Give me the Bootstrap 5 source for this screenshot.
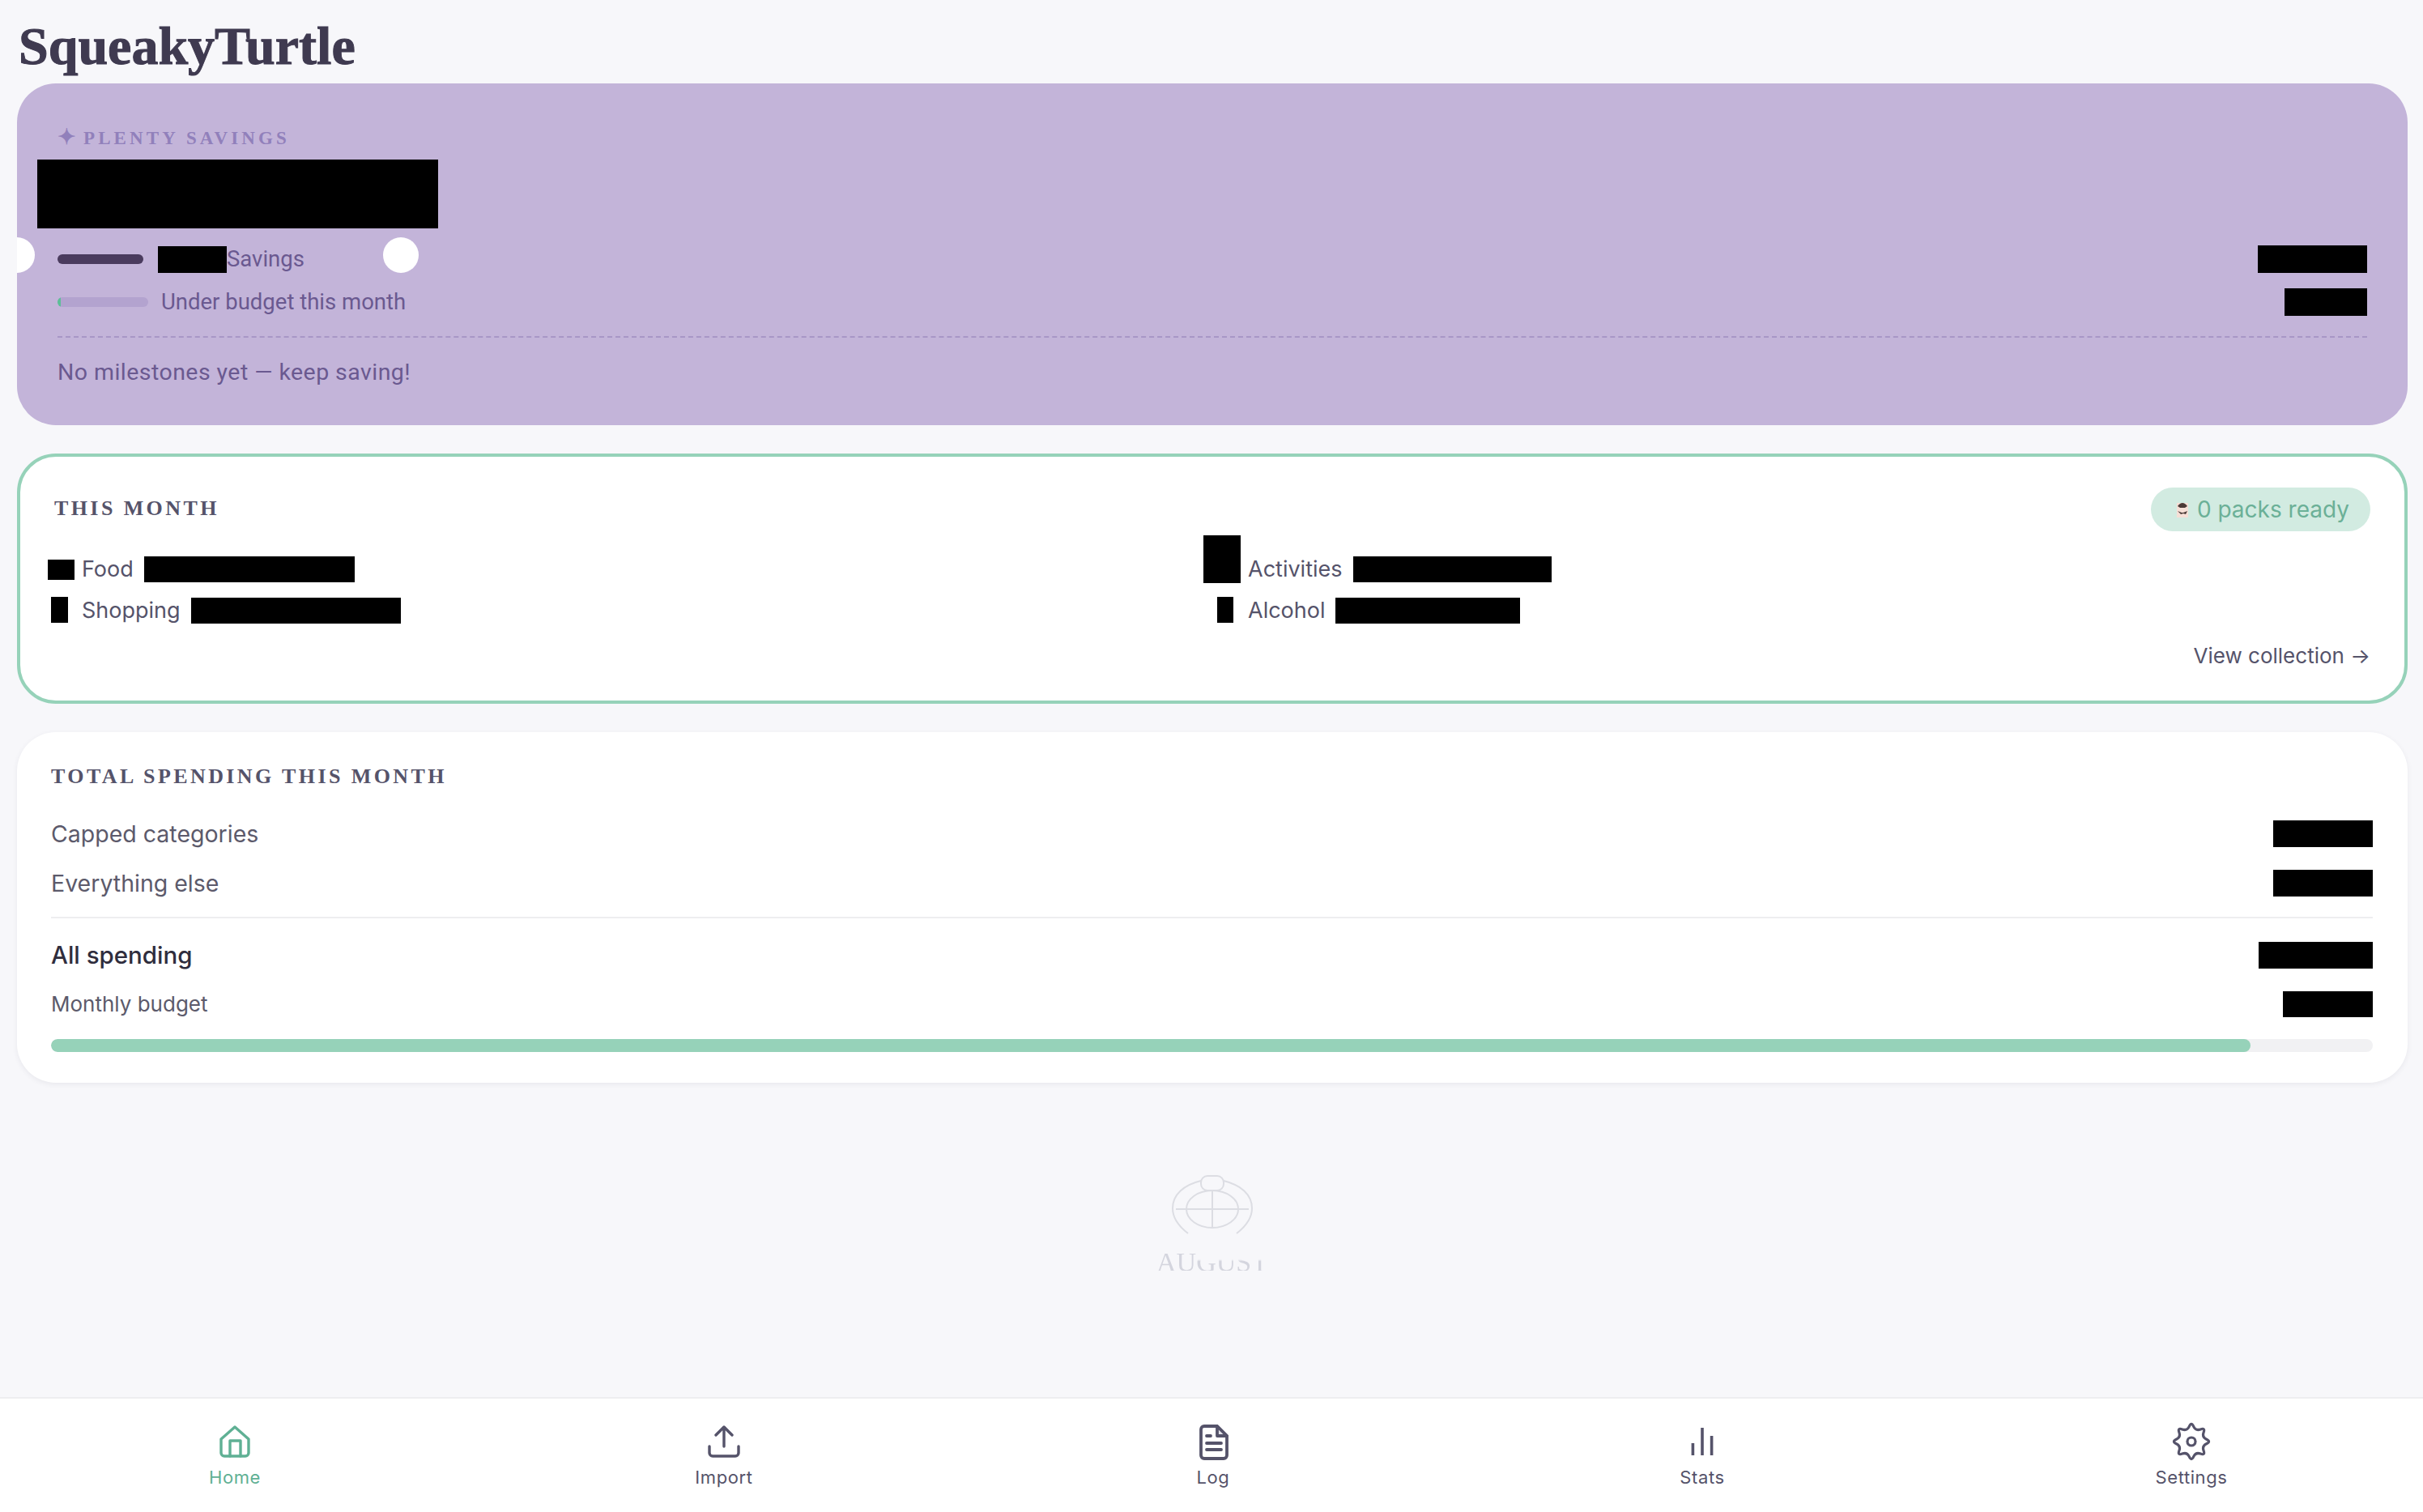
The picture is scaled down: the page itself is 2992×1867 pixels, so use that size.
<!DOCTYPE html>
<html lang="en">
<head>
  <meta charset="UTF-8">
  <meta name="viewport" content="width=device-width, initial-scale=1.0">
  <link rel="stylesheet" href="https://cdn.jsdelivr.net/npm/bootstrap@5.3.6/dist/css/bootstrap.min.css">
  <script src="https://cdn.jsdelivr.net/npm/bootstrap@5.3.6/dist/js/bootstrap.bundle.min.js"></script>
  <style>
    html, body { height: 100%; }
    body { background: #f7f7fa; font-family: "Inter", "Liberation Sans", sans-serif; color: #5c5a6b; overflow: hidden; }
    .st-page { height: 1867px; padding-top: 24px; }
    .st-main { padding: 0 19px 0 21px; }
    .st-title { font-family: "Liberation Serif", serif; font-weight: 700; font-size: 66px; line-height: 1; color: #3f3a50; margin: 0 0 0 2px; height: 79px; letter-spacing: 0; -webkit-text-stroke: 1px #3f3a50; }
    .st-hero { height: 422px; background: #c3b4d9; border-radius: 48px; padding: 51px 50px 0; position: relative; overflow: hidden; color: #6a5990; font-family: "Roboto", sans-serif; font-size: 27.5px; }
    .st-label { font-family: "Liberation Serif", serif; font-weight: 700; font-size: 23px; letter-spacing: 4.1px; color: #9180bb; height: 44px; line-height: 30px; }
    .st-star { font-size: 27px; letter-spacing: 0; margin-right: 9px; }
    .st-big { width: 495px; height: 85px; background: #000; margin: -1px 0 21px -25px; }
    .st-hrow { height: 34px; }
    .st-hrow2 { height: 34px; margin-top: 19px; }
    .st-barsm { width: 106px; height: 12px; background: #4a3b5e; border-radius: 6px; }
    .st-bud { width: 112px; height: 12px; background: #b3a3cf; border-radius: 6px; overflow: hidden; }
    .st-bud-fill { width: 4px; height: 100%; background: #5cbf97; }
    .rd { background: #000; display: block; flex: none; }
    .rd-a { width: 85px; height: 33px; margin-left: 18px; }
    .rd-b { width: 135px; height: 34px; }
    .rd-c { width: 102px; height: 34px; }
    .st-dash { border-top: 2px dashed #a896c6; margin: 25px 0 0; }
    .st-none { margin-top: 25px; line-height: 36px; font-size: 28.5px; letter-spacing: .45px; }
    .st-hole { position: absolute; width: 44px; height: 44px; border-radius: 50%; background: #fff; top: 190px; }
    .st-hole-l { left: -22px; }
    .st-hole-r { left: 452px; }
    .st-month { height: 309px; margin-top: 35px; background: #fff; border: 4px solid #96d2b9; border-radius: 48px; padding: 38px 42px 0; }
    .st-head { font-family: "Liberation Serif", serif; font-weight: 700; font-size: 26px; letter-spacing: 3.4px; color: #55536a; line-height: 30px; }
    .st-top .st-head { margin-bottom: 3px; }
    .st-pill { height: 54px; background: #d2ebe1; color: #6bb097; border-radius: 27px; font-size: 28px; padding: 0 26px 0 29px; }
    .st-top { height: 54px; }
    .st-grid { display: grid; grid-template-columns: 1fr 1fr; column-gap: 20px; row-gap: 17px; margin-top: 30px; }
    .st-cat { height: 34px; font-size: 27px; color: #55536a; }
    .st-slot { width: 34px; height: 34px; position: relative; flex: none; }
    .st-cat-food { width: 33px; height: 25px; margin: 5px 0 0 -8px; }
    .st-cat-shop { width: 21px; height: 32px; margin-left: -4px; }
    .st-cat-act { width: 46px; height: 59px; margin: -25px 0 0 -21px; }
    .st-cat-alc { width: 20px; height: 32px; margin-left: -4px; }
    .st-val { height: 32px; margin-left: 13px; }
    .w-food { width: 260px; } .w-shop { width: 259px; } .w-act { width: 245px; } .w-alc { width: 228px; }
    .st-view { font-size: 26px; color: #55536a; margin-top: 21px; line-height: 36px; }
    .st-total { height: 433px; margin-top: 35px; background: #fff; border-radius: 48px; box-shadow: 0 2px 6px rgba(60, 60, 90, .08); padding: 40px 43px 0 42px; }
    .st-line { font-size: 28.5px; color: #5c5a6b; height: 33px; line-height: 33px; }
    .st-line-1 { margin-top: 39px; }
    .st-line-2 { margin-top: 28px; }
    .st-rule { height: 2px; background: #eeeef0; margin: 25px 0 29px; }
    .st-all { font-size: 29.5px; font-weight: 500; color: #2f2d3d; }
    .st-budget { font-size: 26px; color: #5c5a6b; margin-top: 27px; }
    .rd-123 { width: 123px; height: 33px; }
    .rd-141 { width: 141px; height: 33px; }
    .rd-111 { width: 111px; height: 32px; }
    .st-track { height: 16px; margin-top: 27px; background: #f1f1f3; border-radius: 8px; overflow: hidden; }
    .st-fill { height: 100%; background: #96d2b9; border-radius: 8px; }
    .st-logo { margin-top: 114px; }
    .st-logo-word { font-family: "Liberation Serif", serif; font-size: 34px; line-height: 34px; height: 34px; color: #d4d5de; margin-top: 15px; -webkit-mask-image: linear-gradient(to bottom, #000 79%, transparent 79%); mask-image: linear-gradient(to bottom, #000 79%, transparent 79%); }
    .st-logo-fade { -webkit-mask-image: linear-gradient(to bottom, transparent 38%, #000 46%); mask-image: linear-gradient(to bottom, transparent 38%, #000 46%); }
    .st-nav { position: absolute; left: 0; right: 0; top: 1725px; height: 142px; background: #fff; border-top: 2px solid #eeeef0; padding: 0 196px 0 200px; }
    .st-item { width: 180px; padding-top: 29px; color: #55536a; font-size: 22px; line-height: 28px; letter-spacing: .6px; text-decoration: none; }
    .st-item svg { display: block; width: 48px; height: 48px; margin-bottom: 6px; }
    .st-item-on { color: #5fb094; }
  </style>
  <title>SqueakyTurtle</title>
</head>
<body>
  <div class="st-page position-relative">
    <div class="st-main">
      <h1 class="st-title">SqueakyTurtle</h1>

      <section class="st-hero">
        <span class="st-hole st-hole-l"></span>
        <span class="st-hole st-hole-r"></span>
        <div class="st-label"><span class="st-star">✦</span>PLENTY SAVINGS</div>
        <div class="st-big"></div>
        <div class="st-hrow d-flex align-items-center justify-content-between">
          <div class="d-flex align-items-center">
            <div class="st-barsm"></div>
            <span class="rd rd-a"></span>
            <span>Savings</span>
          </div>
          <span class="rd rd-b"></span>
        </div>
        <div class="st-hrow2 d-flex align-items-center justify-content-between">
          <div class="d-flex align-items-center gap-3">
            <div class="st-bud"><div class="st-bud-fill"></div></div>
            <span>Under budget this month</span>
          </div>
          <span class="rd rd-c"></span>
        </div>
        <div class="st-dash"></div>
        <div class="st-none">No milestones yet — keep saving!</div>
      </section>

      <section class="st-month">
        <div class="st-top d-flex align-items-center justify-content-between">
          <div class="st-head">THIS MONTH</div>
          <div class="st-pill d-flex align-items-center gap-2">
            <svg width="20" height="26" viewBox="0 0 20 26"><rect x="3" y="5" width="14" height="18" fill="#f6dfd6"/><path d="M4 9q6-8 12 0l-3 2H7z" fill="#4b3a36"/><path d="M4 15l5 2 2 0 5-2-2 4-3-1-3 1z" fill="#4b3a36"/></svg>
            <span>0 packs ready</span>
          </div>
        </div>
        <div class="st-grid">
          <div class="st-cat d-flex align-items-center">
            <div class="st-slot"><span class="rd st-cat-food"></span></div>
            <span>Food</span>
            <span class="rd st-val w-food"></span>
          </div>
          <div class="st-cat d-flex align-items-center">
            <div class="st-slot"><span class="rd st-cat-act"></span></div>
            <span>Activities</span>
            <span class="rd st-val w-act"></span>
          </div>
          <div class="st-cat d-flex align-items-center">
            <div class="st-slot"><span class="rd st-cat-shop"></span></div>
            <span>Shopping</span>
            <span class="rd st-val w-shop"></span>
          </div>
          <div class="st-cat d-flex align-items-center">
            <div class="st-slot"><span class="rd st-cat-alc"></span></div>
            <span>Alcohol</span>
            <span class="rd st-val w-alc"></span>
          </div>
        </div>
        <div class="st-view text-end">View collection →</div>
      </section>

      <section class="st-total">
        <div class="st-head">TOTAL SPENDING THIS MONTH</div>
        <div class="st-line st-line-1 d-flex align-items-center justify-content-between">
          <span>Capped categories</span><span class="rd rd-123"></span>
        </div>
        <div class="st-line st-line-2 d-flex align-items-center justify-content-between">
          <span>Everything else</span><span class="rd rd-123"></span>
        </div>
        <div class="st-rule"></div>
        <div class="st-line st-all d-flex align-items-center justify-content-between">
          <span>All spending</span><span class="rd rd-141"></span>
        </div>
        <div class="st-line st-budget d-flex align-items-center justify-content-between">
          <span>Monthly budget</span><span class="rd rd-111"></span>
        </div>
        <div class="st-track"><div class="st-fill" style="width: 94.75%"></div></div>
      </section>

      <div class="st-logo d-flex flex-column align-items-center">
        <svg width="100" height="76" viewBox="0 0 100 76" fill="none" stroke="#dcdde3" stroke-width="2">
          <path d="M20 72C7 62 1 51 1 41 1 24 15 12 36 7M64 7c21 5 35 17 35 34 0 10-6 21-19 31"/>
          <ellipse cx="50" cy="42" rx="32" ry="23"/>
          <rect x="36" y="1" width="28" height="18" rx="8"/>
          <path d="M5 42h90M50 19v46"/>
        </svg>
        <div class="st-logo-word">AU<span class="st-logo-fade d-inline-block">GUST</span></div>
      </div>
    </div>

    <nav class="st-nav d-flex justify-content-between">
      <a class="st-item st-item-on d-flex flex-column align-items-center" href="#">
        <svg viewBox="0 0 24 24" fill="none" stroke="currentColor" stroke-width="1.7" stroke-linecap="round" stroke-linejoin="round"><path d="M3.5 10.5 12 3l8.5 7.5V19a2 2 0 0 1-2 2h-13a2 2 0 0 1-2-2z"/><path d="M9 21v-9.500h6.500V21"/></svg>
        <span>Home</span>
      </a>
      <a class="st-item d-flex flex-column align-items-center" href="#">
        <svg viewBox="0 0 24 24" fill="none" stroke="currentColor" stroke-width="1.7" stroke-linecap="round" stroke-linejoin="round"><path d="M3 15v4a2 2 0 0 0 2 2h14a2 2 0 0 0 2-2v-4"/><path d="M12 15V3M7 8l5-5 5 5"/></svg>
        <span>Import</span>
      </a>
      <a class="st-item d-flex flex-column align-items-center" href="#">
        <svg viewBox="0 0 24 24" fill="none" stroke="currentColor" stroke-width="1.9" stroke-linecap="round" stroke-linejoin="round"><path d="M14.500 2.500H6.500a2 2 0 0 0-2 2v16a2 2 0 0 0 2 2h12a2 2 0 0 0 2-2V8.500z"/><path d="M14.500 2.500v6h6z" fill="#e4e4ea"/><path d="M8 8.500h2.500M8 13h9M8 17h9"/></svg>
        <span>Log</span>
      </a>
      <a class="st-item d-flex flex-column align-items-center" href="#">
        <svg viewBox="0 0 24 24" fill="none" stroke="currentColor" stroke-width="1.8" stroke-linecap="butt"><path d="M6.200 20.500V13M12 20.500V3.500M17.800 20.500V8.500"/></svg>
        <span>Stats</span>
      </a>
      <a class="st-item d-flex flex-column align-items-center" href="#">
        <svg viewBox="0 0 24 24" fill="none" stroke="currentColor" stroke-width="1.6" stroke-linecap="round" stroke-linejoin="round"><circle cx="12" cy="12" r="2.500"/><path d="M10.660 2.665Q12-.2 13.340 2.665Q14.680 5.530 17.655 4.450Q20.630 3.370 19.550 6.345Q18.470 9.320 21.335 10.660Q24.200 12 21.335 13.340Q18.470 14.680 19.550 17.655Q20.630 20.630 17.655 19.550Q14.680 18.470 13.340 21.335Q12 24.200 10.660 21.335Q9.320 18.470 6.345 19.550Q3.370 20.630 4.450 17.655Q5.530 14.680 2.665 13.340Q-.2 12 2.665 10.660Q5.530 9.320 4.450 6.345Q3.370 3.370 6.345 4.450Q9.320 5.530 10.660 2.665Z"/></svg>
        <span>Settings</span>
      </a>
    </nav>
  </div>
</body>
</html>
